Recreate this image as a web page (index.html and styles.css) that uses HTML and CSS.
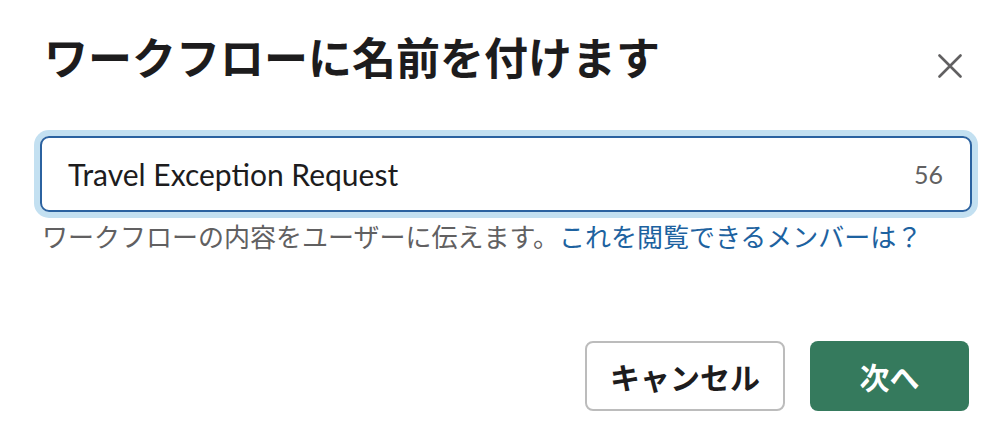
FILE: index.html
```html
<!DOCTYPE html>
<html lang="ja">
<head>
<meta charset="utf-8">
<title>ワークフローに名前を付けます</title>
<link rel="stylesheet" href="styles.css">
</head>
<body>
<div class="dialog">
  <header class="dialog-header">
    <h1 class="dialog-title">ワークフローに名前を付けます</h1>
    <button class="close-btn" aria-label="閉じる">
      <svg width="24" height="24" viewBox="0 0 24 24" aria-hidden="true">
        <path d="M1.5 1.5 L22.5 22.5 M22.5 1.5 L1.5 22.5" stroke="#616061" stroke-width="2.6" stroke-linecap="round" fill="none"/>
      </svg>
    </button>
  </header>
  <div class="field">
    <div class="input-box">
      <span class="input-value">Travel Exception Request</span>
      <span class="input-count">56</span>
    </div>
    <p class="helper">ワークフローの内容をユーザーに伝えます。<a class="helper-link" href="#">これを閲覧できるメンバーは？</a></p>
  </div>
  <footer class="dialog-footer">
    <button class="btn btn-secondary">キャンセル</button>
    <button class="btn btn-primary">次へ</button>
  </footer>
</div>
</body>
</html>
```

FILE: styles.css
```css
* {
  box-sizing: border-box;
}

html, body {
  margin: 0;
  padding: 0;
  background: #ffffff;
}

body {
  width: 1000px;
  height: 442px;
  overflow: hidden;
  font-family: "Noto Sans CJK JP", "Noto Sans", sans-serif;
  color: #1d1c1d;
}

.dialog {
  display: flex;
  flex-direction: column;
  padding: 28px 28px 0 40px;
}

.dialog-header {
  display: flex;
  align-items: flex-start;
  justify-content: space-between;
  padding-right: 10px;
}

.dialog-title {
  margin: 0 0 0 4px;
  font-size: 44px;
  line-height: 56px;
  font-weight: 700;
  color: #1d1c1d;
  letter-spacing: 0;
}

.close-btn {
  margin-top: 26px;
  width: 24px;
  height: 24px;
  padding: 0;
  border: none;
  background: transparent;
  display: flex;
}

.field {
  margin-top: 52px;
}

.input-box {
  height: 76px;
  display: flex;
  align-items: center;
  justify-content: space-between;
  padding: 0 27px 0 26px;
  border: 2px solid #2b62a0;
  border-radius: 9px;
  box-shadow: 0 0 0 6px #c3e0f1;
}

.input-value {
  font-family: Lato, "Noto Sans", sans-serif;
  font-size: 30px;
  color: #1d1c1d;
}

.input-count {
  font-family: Lato, "Noto Sans", sans-serif;
  font-size: 25px;
  color: #616061;
}

.helper {
  margin: 4px 0 0 2px;
  font-size: 26px;
  line-height: 40px;
  color: #616061;
  white-space: nowrap;
}

.helper-link {
  color: #1d62a0;
  text-decoration: none;
}

.dialog-footer {
  margin-top: 85px;
  display: flex;
  justify-content: flex-end;
  gap: 25px;
  padding-right: 3px;
}

.btn {
  height: 70px;
  border-radius: 8px;
  font-family: "Noto Sans CJK JP", "Noto Sans", sans-serif;
  font-size: 30px;
  font-weight: 700;
  display: flex;
  align-items: center;
  justify-content: center;
}

.btn-secondary {
  width: 200px;
  background: #ffffff;
  border: 2px solid #bcbcbc;
  color: #1d1c1d;
}

.btn-primary {
  width: 159px;
  background: #357a5d;
  border: none;
  color: #ffffff;
}
```
